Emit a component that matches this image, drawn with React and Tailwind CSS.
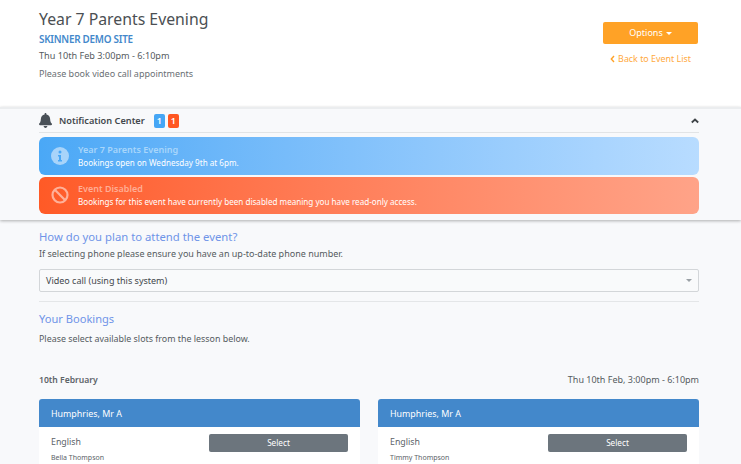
const font = { fontFamily: '"Noto Sans", "Open Sans", sans-serif' };

function Bell() {
  return (
    <svg width="13" height="15" viewBox="0 0 448 512" fill="#495057">
      <path d="M224 512c35.3 0 64-28.7 64-64H160c0 35.3 28.7 64 64 64zm215.4-149.7c-19.3-20.8-55.5-52-55.5-154.3 0-77.7-54.5-139.9-127.9-155.2V32c0-17.7-14.3-32-32-32s-32 14.3-32 32v20.8C118.600 68.100 64.100 130.300 64.100 208c0 102.300-36.200 133.500-55.500 154.300-6 6.400-8.700 14.100-8.600 21.700.1 16.400 13 32 32.100 32h383.800c19.100 0 32-15.600 32.100-32 .1-7.600-2.600-15.300-8.600-21.700z" />
    </svg>
  );
}

function Alert({ gradient, icon, title, titleColor, body, h }) {
  return (
    <div className={`flex items-center rounded-md pl-[12px] ${h} ${gradient}`}>
      <div className="w-[18px] h-[18px] shrink-0">{icon}</div>
      <div className="ml-[9px] leading-[13px]">
        <div className={`text-[9px] font-semibold ${titleColor}`}>{title}</div>
        <div className="text-white text-[8.1px]">{body}</div>
      </div>
    </div>
  );
}

function Card({ student }) {
  return (
    <div className="flex-1 h-[80px] bg-white rounded-t-[3px] overflow-hidden">
      <div className="h-[28px] pt-[1px] bg-[#4388cb] flex items-center pl-[12px] text-white text-[8.9px]">Humphries, Mr A</div>
      <div className="flex justify-between pl-[12px] pr-[12px] pt-[8px]">
        <div>
          <div className="text-[8.8px] leading-[15px] text-[#5c6368]">English</div>
          <div className="text-[7px] leading-[10px] mt-[3px] text-[#5c6368]">{student}</div>
        </div>
        <button className="w-[139px] h-[18px] mt-[-1px] bg-[#6c757d] rounded-[2px] text-white text-[8.2px] flex items-center justify-center">Select</button>
      </div>
    </div>
  );
}

export default function App() {
  return (
    <div style={font} className="w-[741px] h-[464px] overflow-hidden bg-[#f8f9fb] text-[#555b60]">
      <header className="h-[107px] bg-white flex justify-between pl-[39px] pr-[43px] pt-[9px]">
        <div>
          <h1 className="text-[15.800px] leading-[20px] text-[#4b4f53]">Year 7 Parents Evening</h1>
          <div className="text-[9.900px] tracking-[-0.25px] leading-[13px] mt-[3.500px] font-semibold text-[#4388cb]">SKINNER DEMO SITE</div>
          <div className="text-[9.150px] leading-[13px] mt-[3.500px]">Thu 10th Feb 3:00pm - 6:10pm</div>
          <div className="text-[9px] leading-[13px] mt-[5px] text-[#6a7075]">Please book video call appointments</div>
        </div>
        <div className="w-[95px] pt-[13px] flex flex-col items-center">
          <button className="w-[95px] h-[22px] rounded-[2px] bg-[#ffa226] text-white text-[9px] flex items-center justify-center gap-[3px]">
            Options
            <span className="w-0 h-0 border-x-[3px] border-x-transparent border-t-[3px] border-t-white" />
          </button>
          <div className="mt-[8px] text-[8.900px] leading-[13px] text-[#ffa940] flex items-center gap-[3px]">
            <svg width="5" height="8" viewBox="0 0 5 8" fill="none" stroke="#ffa226" strokeWidth="1.400">
              <path d="M4 1 1.300 4 4 7" />
            </svg>
            Back to Event List
          </div>
        </div>
      </header>

      <section className="h-[113px] border-t-2 border-[#ebedef] bg-[#f8f9fb] pl-[39px] pr-[42px] shadow-[0_1px_3px_rgba(0,0,0,0.3)] relative">
        <div className="h-[24px] flex items-center border-b border-[#e2e4e6]">
          <Bell />
          <span className="ml-[7px] text-[9.200px] font-semibold text-[#43484d]">Notification Center</span>
          <span className="ml-[9px] w-[11px] h-[14px] rounded-[2px] bg-[#46a6f5] text-white text-[9px] font-semibold flex items-center justify-center">1</span>
          <span className="ml-[3px] w-[11px] h-[14px] rounded-[2px] bg-[#ff5722] text-white text-[9px] font-semibold flex items-center justify-center">1</span>
          <svg className="ml-auto" width="8" height="6" viewBox="0 0 8 6" fill="none" stroke="#3f4448" strokeWidth="1.800">
            <path d="M.8 4.500 4 1.500l3.200 3" />
          </svg>
        </div>
        <div className="mt-[4px] flex flex-col gap-[1.500px]">
          <Alert
            h="h-[38px]"
            gradient="bg-gradient-to-r from-[#4aa8f6] to-[#b8dcff]"
            titleColor="text-[#a8d6fb]"
            title="Year 7 Parents Evening"
            body="Bookings open on Wednesday 9th at 6pm."
            icon={
              <svg viewBox="0 0 18 18" width="18" height="18">
                <circle cx="9" cy="9" r="9" fill="#a8d4fa" />
                <circle cx="9" cy="5" r="1.500" fill="#4aa8f6" />
                <path d="M7 8h3v5h1v1.500H7V13h1V9.500H7z" fill="#4aa8f6" />
              </svg>
            }
          />
          <Alert
            h="h-[37px]"
            gradient="bg-gradient-to-r from-[#ff5a26] to-[#ffa388]"
            titleColor="text-[#ffae96]"
            title="Event Disabled"
            body="Bookings for this event have currently been disabled meaning you have read-only access."
            icon={
              <svg viewBox="0 0 18 18" width="18" height="18" fill="none" stroke="#ffb199" strokeWidth="2.200">
                <circle cx="9" cy="9" r="7.500" />
                <path d="M3.800 3.800l10.400 10.400" />
              </svg>
            }
          />
        </div>
      </section>

      <main className="pl-[39px] pr-[42px] pt-[8px]">
        <h2 className="text-[11.300px] leading-[17px] text-[#6f94e8]">How do you plan to attend the event?</h2>
        <p className="text-[9px] leading-[13px] mt-[2px]">If selecting phone please ensure you have an up-to-date phone number.</p>
        <div className="mt-[9px] h-[23px] border border-[#d3d6d9] rounded-[2px] bg-[#f9fafb] flex items-center justify-between pl-[6px] pr-[6px] text-[9px] text-[#43484d]">
          Video call (using this system)
          <span className="w-0 h-0 border-x-[3px] border-x-transparent border-t-[3px] border-t-[#9aa0a5]" />
        </div>
        <div className="mt-[9px] h-[1px] bg-[#e4e6e8]" />
        <h2 className="mt-[9px] text-[11.100px] leading-[16px] text-[#6f94e8]">Your Bookings</h2>
        <p className="text-[8.900px] leading-[13px] mt-[5px]">Please select available slots from the lesson below.</p>
        <div className="mt-[28px] flex justify-between items-center h-[14px]">
          <span className="text-[8.600px] font-semibold text-[#5c6368]">10th February</span>
          <span className="text-[9px]">Thu 10th Feb, 3:00pm - 6:10pm</span>
        </div>
        <div className="mt-[12px] flex gap-[18px]">
          <Card student="Bella Thompson" />
          <Card student="Timmy Thompson" />
        </div>
      </main>
    </div>
  );
}
